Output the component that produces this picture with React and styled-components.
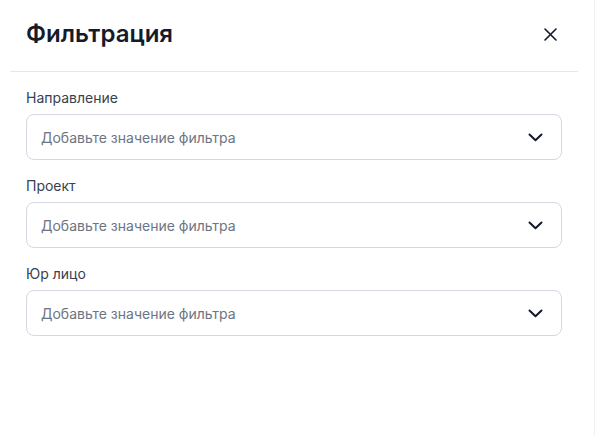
import styled, { createGlobalStyle } from "styled-components";

const GlobalStyle = createGlobalStyle`
  html, body {
    margin: 0;
    padding: 0;
    background: #eef0f3;
  }
  body {
    font-family: Inter, "Noto Sans", sans-serif;
  }
`;

const Panel = styled.div`
  width: 594px;
  height: 435px;
  background: #ffffff;
  display: flex;
  flex-direction: column;
`;

const Header = styled.div`
  height: 72px;
  box-sizing: border-box;
  margin: 0 16px 0 10px;
  padding: 0 21px 3px 16px;
  border-bottom: 1px solid #e5e7eb;
  display: flex;
  align-items: center;
  justify-content: space-between;
`;

const Title = styled.div`
  font-size: 24px;
  line-height: 30px;
  font-weight: 600;
  color: #151b2b;
`;

const CloseButton = styled.button`
  width: 14px;
  height: 14px;
  padding: 0;
  border: none;
  background: none;
  display: flex;
  align-items: center;
  justify-content: center;
  cursor: pointer;
  color: #111827;
`;

const Fields = styled.div`
  padding: 16px 32px 0 26px;
  display: flex;
  flex-direction: column;
  gap: 16px;
`;

const Field = styled.div`
  display: flex;
  flex-direction: column;
  gap: 6px;
`;

const Label = styled.div`
  font-size: 14px;
  line-height: 20px;
  color: #374151;
`;

const Select = styled.div`
  height: 46px;
  box-sizing: border-box;
  border: 1px solid #d6d8e1;
  border-radius: 8px;
  padding: 0 18px 0 14px;
  display: flex;
  align-items: center;
  justify-content: space-between;
  cursor: pointer;
`;

const Placeholder = styled.span`
  font-size: 14px;
  color: #6e7482;
`;

const fields = ["Направление", "Проект", "Юр лицо"];

const Chevron = () => (
  <svg width="15" height="9" viewBox="0 0 15 9" fill="none">
    <path d="M1.5 1.5 L7.5 7.2 L13.5 1.5" stroke="#111827" strokeWidth="2" strokeLinecap="round" strokeLinejoin="round" />
  </svg>
);

const App = () => (
  <>
    <GlobalStyle />
    <Panel>
      <Header>
        <Title>Фильтрация</Title>
        <CloseButton>
          <svg width="13" height="13" viewBox="0 0 13 13" fill="none">
            <path d="M1 1 L12 12 M12 1 L1 12" stroke="currentColor" strokeWidth="1.6" strokeLinecap="round" />
          </svg>
        </CloseButton>
      </Header>
      <Fields>
        {fields.map((name) => (
          <Field key={name}>
            <Label>{name}</Label>
            <Select>
              <Placeholder>Добавьте значение фильтра</Placeholder>
              <Chevron />
            </Select>
          </Field>
        ))}
      </Fields>
    </Panel>
  </>
);

export default App;
